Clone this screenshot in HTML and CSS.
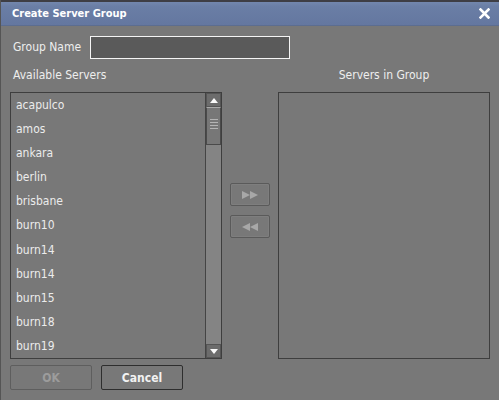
FILE: index.html
```html
<!DOCTYPE html>
<html>
<head>
<meta charset="utf-8">
<link rel="stylesheet" href="styles.css">
</head>
<body>
<div class="dialog">
  <div class="titlebar">
    <span class="title">Create Server Group</span>
    <svg class="close" width="11" height="11" viewBox="0 0 11 11"><path d="M1.5 1.5 L9.5 9.5 M9.5 1.5 L1.5 9.5" stroke="#fff" stroke-width="2.6" stroke-linecap="square"/></svg>
  </div>
  <div class="body">
    <div class="name-row">
      <span class="label">Group Name</span>
      <div class="input"></div>
    </div>
    <div class="heads">
      <span class="label avail">Available Servers</span>
      <span class="label ingroup">Servers in Group</span>
    </div>
    <div class="main">
      <div class="listbox">
        <ul class="items">
          <li>acapulco</li>
          <li>amos</li>
          <li>ankara</li>
          <li>berlin</li>
          <li>brisbane</li>
          <li>burn10</li>
          <li>burn14</li>
          <li>burn14</li>
          <li>burn15</li>
          <li>burn18</li>
          <li>burn19</li>
        </ul>
        <div class="scrollbar">
          <div class="sb-btn"><span class="tri-up"></span></div>
          <div class="thumb">
            <span class="grip"></span><span class="grip"></span><span class="grip"></span><span class="grip"></span>
          </div>
          <div class="track"></div>
          <div class="sb-btn"><span class="tri-down"></span></div>
        </div>
      </div>
      <div class="mid">
        <div class="move-btn"><span class="tr"></span><span class="tr"></span></div>
        <div class="move-btn rev"><span class="tl"></span><span class="tl"></span></div>
      </div>
      <div class="listbox right"></div>
    </div>
    <div class="footer">
      <div class="btn disabled">OK</div>
      <div class="btn">Cancel</div>
    </div>
  </div>
</div>
</body>
</html>
```
FILE: styles.css
```css
* { box-sizing: border-box; margin: 0; padding: 0; }
html, body { width: 499px; height: 400px; overflow: hidden; }
body {
  background: #787878;
  font-family: "DejaVu Sans Condensed", "DejaVu Sans", sans-serif;
  font-size: 12px;
  color: #ececec;
}
.dialog { width: 499px; height: 400px; border-left: 1px solid #555; }
.titlebar {
  height: 26px;
  border-top: 2px solid #3e3e44;
  background: linear-gradient(#7387ad 0%, #6a7ea5 20%, #6477a0 100%);
  border-bottom: 1px solid #5c6d90;
  display: flex;
  align-items: center;
  justify-content: space-between;
  padding: 0 9px 0 11px;
}
.title { color: #fff; font-weight: bold; font-size: 11px; }
.close { display: block; }
.body { padding: 10px 9px 0 9px; }
.name-row { display: flex; align-items: center; height: 22px; }
.label { color: #eeeeee; }
.name-row .label { width: 80px; padding-left: 3px; }
.input {
  width: 200px; height: 23px;
  background: #5a5a5a;
  border: 1px solid #f4f4f4;
}
.heads { display: flex; height: 34px; align-items: center; }
.avail { width: 268px; padding-left: 3px; }
.ingroup { width: 212px; text-align: center; }
.main { display: flex; height: 267px; }
.listbox {
  width: 212px; height: 267px;
  border: 1px solid #3e3e3e;
  display: flex;
}
.items { list-style: none; flex: 1; padding-top: 2px; }
.items li { height: 24.1px; line-height: 20px; padding-left: 5px; }
.scrollbar {
  width: 16px;
  display: flex; flex-direction: column;
  border-left: 1px solid #444;
  background: #838383;
}
.sb-btn {
  height: 14px; background: #6c6c6c;
  display: flex; align-items: center; justify-content: center;
  border: 1px solid #555;
}
.tri-up { width: 0; height: 0; border-left: 4px solid transparent; border-right: 4px solid transparent; border-bottom: 5px solid #fafafa; }
.tri-down { width: 0; height: 0; border-left: 4px solid transparent; border-right: 4px solid transparent; border-top: 5px solid #fafafa; }
.thumb {
  height: 38px; background: #777;
  border: 1px solid #4a4a4a;
  border-top: 1px solid #aaa;
  display: flex; flex-direction: column; align-items: center; padding-top: 11px; gap: 2px;
}
.grip { width: 8px; height: 1px; background: #b4b4b4; display: block; }
.track { flex: 1; background: #848484; }
.mid {
  width: 56px;
  display: flex; flex-direction: column; align-items: center;
  padding-top: 91px; gap: 9px;
}
.move-btn {
  width: 40px; height: 23px;
  border: 1px solid #5a5a5a;
  border-radius: 2px;
  display: flex; align-items: center; justify-content: center;
  box-shadow: inset 0 0 0 1px #7e7e7e;
}
.tr { width: 0; height: 0; border-top: 4px solid transparent; border-bottom: 4px solid transparent; border-left: 8px solid #a8a8a8; }
.tl { width: 0; height: 0; border-top: 4px solid transparent; border-bottom: 4px solid transparent; border-right: 8px solid #a8a8a8; }
.footer { display: flex; gap: 9px; padding-top: 6px; }
.btn {
  width: 82px; height: 25px;
  border: 1px solid #2e2e2e;
  border-radius: 2px;
  display: flex; align-items: center; justify-content: center;
  font-weight: bold; color: #f2f2f2;
}
.btn.disabled { border-color: #5e5e5e; color: #9c9c9c; }
```
